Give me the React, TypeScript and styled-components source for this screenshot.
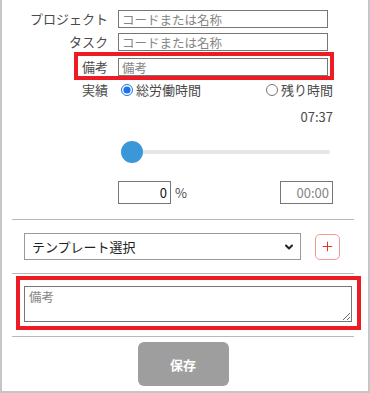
import { useState } from "react";
import styled, { createGlobalStyle } from "styled-components";
import { ChevronDown, Plus } from "lucide-react";

const GlobalStyle = createGlobalStyle`
  body {
    margin: 0;
    background: #ffffff;
    font-family: "Noto Sans CJK JP", "Noto Sans", sans-serif;
  }
  * {
    box-sizing: border-box;
  }
`;

const Frame = styled.div`
  width: 370px;
  height: 393px;
  border: 2px solid #c6c6c6;
  border-top: none;
  background: #ffffff;
  padding-top: 10px;
`;

const FieldRow = styled.div<{ $top?: number; $marked?: boolean }>`
  position: relative;
  display: grid;
  grid-template-columns: 106px 210px;
  column-gap: 10px;
  align-items: center;
  margin-top: ${(p) => p.$top ?? 0}px;

  ${(p) =>
    p.$marked &&
    `
    &::after {
      content: "";
      position: absolute;
      top: -6px;
      bottom: -4px;
      left: 72px;
      right: 34px;
      border: 4px solid #ed1c24;
      pointer-events: none;
    }
  `}
`;

const Label = styled.label`
  text-align: right;
  font-size: 13px;
  line-height: 16px;
  color: #4a4a4a;
`;

const TextInput = styled.input`
  height: 18px;
  width: 210px;
  border: 1px solid #767676;
  border-radius: 0;
  padding: 0 3px;
  font-family: inherit;
  font-size: 12.5px;
  color: #222222;
  outline: none;

  &::placeholder {
    color: #858585;
  }
`;

const RadioRow = styled.div`
  display: grid;
  grid-template-columns: 106px 1fr;
  column-gap: 13px;
  align-items: center;
  margin-top: 6px;
  padding-right: 35px;
  height: 16px;
`;

const RadioGroup = styled.div`
  display: flex;
  justify-content: space-between;
  align-items: center;
`;

const RadioOption = styled.label`
  display: flex;
  align-items: center;
  gap: 3px;
  font-size: 13px;
  color: #4a4a4a;
  line-height: 16px;
`;

const Radio = styled.input`
  margin: 0;
  width: 12px;
  height: 12px;
  accent-color: #1a73e8;
`;

const TotalTime = styled.div`
  margin-top: 11px;
  padding-right: 35px;
  text-align: right;
  font-size: 13px;
  line-height: 16px;
  color: #4a4a4a;
`;

const SliderRow = styled.div`
  margin-top: 16px;
  padding-left: 119px;
  height: 22px;
  display: flex;
`;

const Range = styled.input`
  -webkit-appearance: none;
  appearance: none;
  width: 209px;
  height: 22px;
  margin: 0;
  background: transparent;

  &::-webkit-slider-runnable-track {
    height: 4px;
    background: #e6e6e6;
    border-radius: 2px;
  }

  &::-webkit-slider-thumb {
    -webkit-appearance: none;
    width: 22px;
    height: 22px;
    margin-top: -9px;
    border-radius: 50%;
    background: #3a98d8;
    border: none;
  }
`;

const InputsRow = styled.div`
  margin-top: 18px;
  padding-left: 116px;
  padding-right: 35px;
  display: flex;
  align-items: center;
`;

const NumberBox = styled.input<{ $w: number; $muted?: boolean }>`
  width: ${(p) => p.$w}px;
  height: 23px;
  border: 1px solid #767676;
  border-radius: 0;
  padding: 0 3px;
  text-align: right;
  font-family: inherit;
  font-size: 13px;
  color: ${(p) => (p.$muted ? "#858585" : "#111111")};
  outline: none;
`;

const Unit = styled.span`
  margin-left: 4px;
  font-size: 13px;
  color: #4a4a4a;
`;

const Spacer = styled.div`
  flex: 1;
`;

const Divider = styled.hr<{ $top: number }>`
  margin: ${(p) => p.$top}px 14px 0 10px;
  border: none;
  border-top: 1px solid #b8b8b8;
  height: 0;
`;

const TemplateRow = styled.div`
  margin-top: 13px;
  padding-left: 22px;
  display: flex;
  align-items: center;
  gap: 14px;
`;

const SelectWrap = styled.div`
  position: relative;
  width: 277px;
  height: 27px;
`;

const Select = styled.select`
  -webkit-appearance: none;
  appearance: none;
  width: 100%;
  height: 100%;
  border: 1px solid #9a9a9a;
  border-radius: 0;
  background: #ffffff;
  padding: 0 24px 0 7px;
  font-family: inherit;
  font-size: 13px;
  color: #222222;
  outline: none;
`;

const Chevron = styled.span`
  position: absolute;
  right: 6px;
  top: 8px;
  display: flex;
  pointer-events: none;
  color: #222222;
`;

const AddButton = styled.button`
  width: 25px;
  height: 26px;
  padding: 0;
  border: 1px solid #f39a92;
  border-radius: 5px;
  background: #ffffff;
  display: flex;
  align-items: center;
  justify-content: center;
  color: #e8251c;
  cursor: pointer;
`;

const MarkedBox = styled.div`
  margin: 2px 7px 0 14px;
  border: 4px solid #ed1c24;
  padding: 6px 5px 4px 4px;
  height: 54px;
`;

const Memo = styled.textarea`
  display: block;
  width: 100%;
  height: 36px;
  border: 1px solid #767676;
  border-radius: 0;
  padding: 2px 4px;
  font-family: inherit;
  font-size: 12.5px;
  line-height: 16px;
  outline: none;

  &::placeholder {
    color: #858585;
  }
`;

const SaveRow = styled.div`
  margin-top: 5px;
  display: flex;
  justify-content: center;
  padding-right: 4px;
`;

const SaveButton = styled.button`
  width: 91px;
  height: 44px;
  border: none;
  border-radius: 6px;
  background: #9e9e9e;
  color: #ffffff;
  font-family: inherit;
  font-size: 13px;
  font-weight: 700;
`;

export default function App() {
  const [mode, setMode] = useState("total");

  return (
    <>
      <GlobalStyle />
      <Frame>
        <FieldRow>
          <Label>プロジェクト</Label>
          <TextInput placeholder="コードまたは名称" />
        </FieldRow>
        <FieldRow $top={5}>
          <Label>タスク</Label>
          <TextInput placeholder="コードまたは名称" />
        </FieldRow>
        <FieldRow $top={7} $marked>
          <Label>備考</Label>
          <TextInput placeholder="備考" />
        </FieldRow>

        <RadioRow>
          <Label>実績</Label>
          <RadioGroup>
            <RadioOption>
              <Radio
                type="radio"
                name="mode"
                checked={mode === "total"}
                onChange={() => setMode("total")}
              />
              総労働時間
            </RadioOption>
            <RadioOption>
              <Radio
                type="radio"
                name="mode"
                checked={mode === "rest"}
                onChange={() => setMode("rest")}
              />
              残り時間
            </RadioOption>
          </RadioGroup>
        </RadioRow>

        <TotalTime>07:37</TotalTime>

        <SliderRow>
          <Range type="range" min={0} max={100} defaultValue={0} />
        </SliderRow>

        <InputsRow>
          <NumberBox $w={53} defaultValue="0" />
          <Unit>%</Unit>
          <Spacer />
          <NumberBox $w={53} $muted defaultValue="00:00" />
        </InputsRow>

        <Divider $top={15} />

        <TemplateRow>
          <SelectWrap>
            <Select defaultValue="">
              <option value="">テンプレート選択</option>
            </Select>
            <Chevron>
              <ChevronDown size={12} strokeWidth={4} />
            </Chevron>
          </SelectWrap>
          <AddButton>
            <Plus size={15} strokeWidth={1.5} />
          </AddButton>
        </TemplateRow>

        <Divider $top={13} />

        <MarkedBox>
          <Memo placeholder="備考" />
        </MarkedBox>

        <Divider $top={6} />

        <SaveRow>
          <SaveButton>保存</SaveButton>
        </SaveRow>
      </Frame>
    </>
  );
}
